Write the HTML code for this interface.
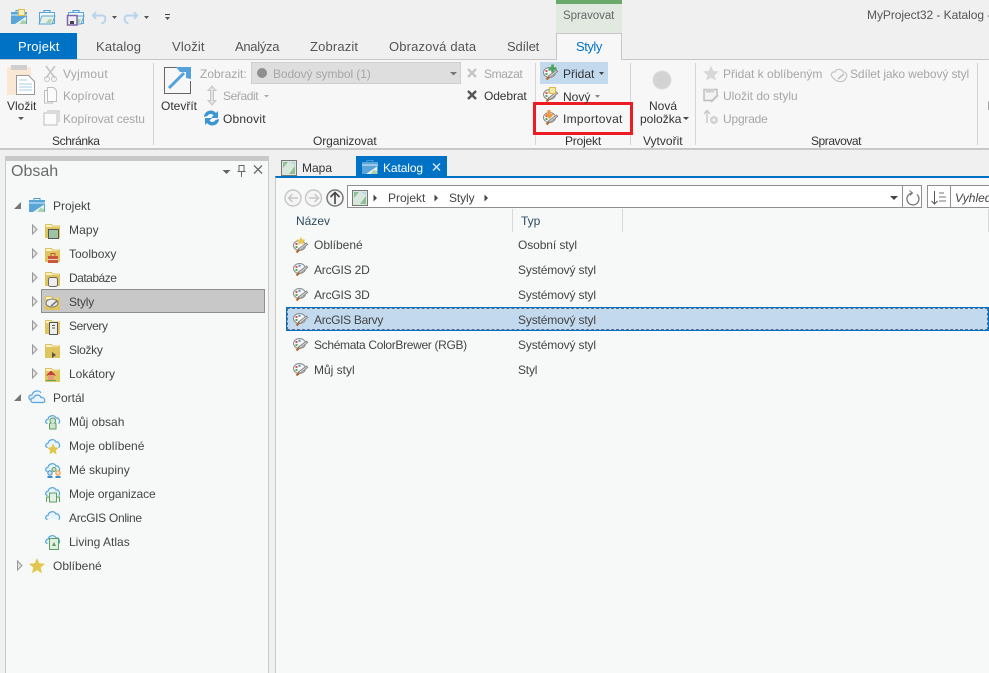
<!DOCTYPE html>
<html lang="cs"><head><meta charset="utf-8"><title>MyProject32 - Katalog</title>
<style>
html,body{margin:0;padding:0;overflow:hidden}
body{width:989px;height:673px;overflow:hidden;position:relative;background:#f0f0f0;font-family:"Liberation Sans",sans-serif;font-size:12px;color:#444}
.b{position:absolute;box-sizing:border-box}
.t{position:absolute;white-space:nowrap;line-height:16px;height:16px;letter-spacing:0}
.d{color:#a6a6a6}
.k{color:#333}
.tab{font-size:13px;color:#555;letter-spacing:.15px}
svg.o{position:absolute;left:0;top:0}
</style></head><body>

<div class="b" style="left:0;top:59px;width:989px;height:91px;background:#f7f7f7;border-top:1px solid #c6c6c6;border-bottom:2px solid #c8c8c8"></div>
<div class="b" style="left:0;top:33px;width:77px;height:26px;background:#0072c6"></div>
<div class="b" style="left:556px;top:0;width:66px;height:33px;background:#e1e9e1;border-top:4px solid #6aa96a"></div>
<div class="b" style="left:556px;top:33px;width:66px;height:27px;background:#f7f7f7;border:1px solid #c6c6c6;border-bottom:0"></div>

<div class="b" style="left:153px;top:63px;width:1px;height:82px;background:#d6d6d6"></div>
<div class="b" style="left:535px;top:63px;width:1px;height:82px;background:#d6d6d6"></div>
<div class="b" style="left:630px;top:63px;width:1px;height:82px;background:#d6d6d6"></div>
<div class="b" style="left:695px;top:63px;width:1px;height:82px;background:#d6d6d6"></div>
<div class="b" style="left:977px;top:63px;width:1px;height:82px;background:#d6d6d6"></div>

<div class="b" style="left:251px;top:62px;width:210px;height:22px;background:#dedede;border:1px solid #cfcfcf"></div>
<div class="b" style="left:540px;top:62px;width:68px;height:22px;background:#c3d9ee"></div>

<!-- left pane -->
<div class="b" style="left:5px;top:156px;width:264px;height:517px;background:#f7f9f9;border:1px solid #c8c8c8;border-top:5px solid #c8c8c8;border-bottom:0"></div>
<div class="b" style="left:41px;top:289px;width:224px;height:24px;background:#c8c8c8;border:1px solid #8f8f8f"></div>

<!-- right pane -->
<div class="b" style="left:275px;top:176px;width:714px;height:497px;background:#f7f9f9;border-left:1px solid #c8c8c8;border-top:2px solid #0072c6"></div>
<div class="b" style="left:356px;top:156px;width:91px;height:20px;background:#0072c6"></div>
<div class="b" style="left:347px;top:185px;width:575px;height:23px;background:#fff;border:1px solid #8f8f8f"></div>
<div class="b" style="left:902px;top:185px;width:1px;height:23px;background:#8f8f8f"></div>
<div class="b" style="left:927px;top:185px;width:62px;height:23px;background:#fff;border:1px solid #8f8f8f;border-right:0"></div>
<div class="b" style="left:950px;top:185px;width:1px;height:23px;background:#8f8f8f"></div>
<div class="b" style="left:512px;top:209px;width:1px;height:23px;background:#d8d8d8"></div>
<div class="b" style="left:622px;top:209px;width:1px;height:23px;background:#d8d8d8"></div>
<div class="b" style="left:988px;top:209px;width:1px;height:23px;background:#d8d8d8"></div>
<div class="b" style="left:286px;top:307px;width:703px;height:24px;background:#c3d9ee;border:1px solid #0072c6"></div>
<div class="b" style="left:287px;top:308px;width:701px;height:22px;border:1px dashed #50708c"></div>

<svg class="o" width="989" height="673" viewBox="0 0 989 673" xmlns="http://www.w3.org/2000/svg">
<defs>
<g id="pal">
 <ellipse cx="6.500" cy="5.500" rx="6" ry="5" fill="#f6f6f6" stroke="#8a8a8a" stroke-width="1"/>
 <rect x="2.500" y="3" width="2" height="2" fill="#d9534f"/><rect x="5.500" y="1.800" width="2" height="2" fill="#4a90d0"/><rect x="2.500" y="6" width="2" height="2" fill="#5aa55a"/>
 <path d="M5.500 10 L14.500 3.500" stroke="#8a8a8a" stroke-width="2.800"/><path d="M6.500 9.500 L13.500 4.200" stroke="#e6e6e6" stroke-width=".8"/>
 <path d="M3.500 12.500 L6 10" stroke="#b0692a" stroke-width="2.200"/>
</g>
<g id="fold">
 <path d="M.5 14V1.500h6l1 1.500h7v11z" fill="#fbf3d0" stroke="#dcc25c"/>
 <rect x="0" y="4" width="15" height="11" fill="#e0c55c"/>
</g>
<g id="case">
 <path d="M5 2.500V.5h6v2" fill="none" stroke="#4b9cd3"/>
 <rect x="0" y="2" width="16" height="12" fill="#5aa5d8"/>
 <path d="M0 5h16" stroke="#d8ebf7"/>
 <path d="M4 14L15 6.500V14z" fill="#e6f1ea"/>
 <path d="M8.500 14l3-4 3.500 1v3z" fill="#a9d2a8"/>
</g>
<g id="caseo">
 <path d="M5 2.500V.5h6v2" fill="none" stroke="#4b9cd3"/>
 <rect x=".5" y="2.500" width="15" height="11" fill="#f3f8fb" stroke="#5aa5d8"/>
 <path d="M0 14l3-8h13l-3 8z" fill="#e6f1ea" stroke="#5aa5d8"/>
 <path d="M7 13l3-4 3 .5-1.500 3.500z" fill="#a9d2a8"/>
</g>
<g id="map">
 <rect x=".5" y=".5" width="15" height="15" fill="#d9e8dc" stroke="#777"/>
 <path d="M2 2h5l-5 6z" fill="#8fbf93"/><path d="M8 14l6-8v8z" fill="#8fbf93"/><path d="M9 2h5v3z" fill="#b8d3e6"/>
</g>
<g id="tri"><path d="M.5 0v9l4.500-4.500z" fill="#e2e2e2" stroke="#999"/></g>
<g id="cloud"><path d="M2.500 9.500C0 9 0 5.500 3 5.300 3.800 1 9.500.5 11 4c3-.8 5 4.500 2.500 5.500" fill="#e8f3fb" stroke="#5aa5d8" stroke-width="1.200"/></g>
</defs>

<!-- QAT -->
<use href="#case" x="11" y="10"/><rect x="18.500" y="9.500" width="6" height="6" fill="#f7eeb4" stroke="#dcc050"/>
<use href="#caseo" x="39" y="10"/>
<use href="#caseo" x="68" y="10"/><rect x="67.500" y="15.500" width="9.500" height="9.500" fill="#f0eef5" stroke="#7d67a8" stroke-width="1.500"/><rect x="70" y="21" width="4" height="3" fill="#444"/>
<path d="M96 12l-3 3.500 3 3.500M93.500 15.500h9c4 0 4 7-1 8" fill="none" stroke="#b6d5ec" stroke-width="2"/>
<path d="M134 12l3 3.500-3 3.500M136.500 15.500h-9c-4 0-4 7 1 8" fill="none" stroke="#b6d5ec" stroke-width="2"/>
<path d="M112 16h5l-2.500 3zM144 16h5l-2.500 3zM165 17h5l-2.500 3z" fill="#555"/><rect x="165" y="14" width="5" height="1" fill="#444"/>

<!-- Clipboard group -->
<rect x="7" y="67" width="24" height="28" fill="#fbe8d4"/><rect x="11" y="65" width="16" height="5" fill="#cfcfcf"/>
<path d="M16.500 75.500h12l6 6v13h-18z" fill="#fff" stroke="#9a9a9a"/><path d="M19 80h8M19 84h13M19 87h13M19 90h13" stroke="#a7cdea"/>
<path d="M18 117h6l-3 3z" fill="#555"/>
<path d="M46 66l9 12M55 66l-9 12" stroke="#c4c4c4" stroke-width="1.600"/><circle cx="47" cy="79" r="2.500" fill="none" stroke="#c4c4c4"/><circle cx="54" cy="79" r="2.500" fill="none" stroke="#c4c4c4"/>
<path d="M47.500 90.500v-3h6l3 3v11h-9zM44.500 90.500h3v11h5v1.500h-8z" fill="#fbfbfb" stroke="#bdbdbd"/>
<rect x="44" y="113" width="13" height="12" fill="#fbfbfb" stroke="#bdbdbd"/><path d="M47 111h12v11" fill="none" stroke="#bdbdbd"/>

<!-- Open -->
<path d="M178 67.500h-13.500v26h26V81" fill="none" stroke="#666"/>
<path d="M169 88l15-15" stroke="#53a3da" stroke-width="3"/><path d="M176 67h15v12l-5-1 0-6-6 0z" fill="#53a3da"/>
<circle cx="262" cy="73" r="5" fill="#8f8f8f"/><path d="M450 72h7l-3.500 3.500z" fill="#777"/>
<path d="M212 86l-4 4.500h2.500v10H208l4 4.500 4-4.500h-2.500v-10h2.500z" fill="#e3e3e3" stroke="#c6c6c6"/>
<path d="M264 95h5l-2.500 2.500z" fill="#aaa"/>
<path d="M204 117c0-6 8-9 12-4l2-2v7h-7l2.500-2.500c-2-2.500-5-1.500-6 .5zM219 119c0 6-8 9-12 4l-2 2v-7h7l-2.500 2.500c2 2.500 5 1.500 6-.5z" fill="#3c96d2"/>
<path d="M468 69l8 8M476 69l-8 8" stroke="#c4c4c4" stroke-width="2.400"/>
<path d="M468 91l8 8M476 91l-8 8" stroke="#555" stroke-width="2.400"/>

<!-- Style cmds -->
<use href="#pal" x="543" y="67"/><path d="M552.500 64.500v8M548.500 68.500h8" stroke="#4aa356" stroke-width="2.600"/>
<path d="M599 72h5l-2.500 3z" fill="#444"/>
<use href="#pal" x="543" y="89"/><rect x="549.500" y="87.500" width="6" height="6" fill="#f5ea9e" stroke="#d8bb4a"/>
<path d="M595 95h5l-2.500 3z" fill="#888"/>
<use href="#pal" x="543" y="112"/><path d="M549 110v5" stroke="#f09a3c" stroke-width="3"/><path d="M545 114l4.500 5 4.500-5z" fill="#f09a3c"/>
<rect x="534.500" y="103.500" width="97" height="30" fill="none" stroke="#ed1c24" stroke-width="3"/>

<circle cx="662" cy="80" r="9" fill="#d3d3d3" stroke="#ddd"/>
<path d="M683 117h6l-3 3z" fill="#444"/>

<!-- Manage -->
<path d="M711 65.500l2.300 5.500 5.700.4-4.400 3.700 1.400 5.600-5-3-5 3 1.400-5.600-4.400-3.700 5.700-.4z" fill="#d8d8d8"/>
<path d="M832 76.500c-2-2 0-5 3-4.500 1-3.500 7-3.500 8 0 3 0 5 3 3 6-1 3-4 4-7 3.500-3-.5-5-2-7-5z" fill="#f6f6f6" stroke="#c8c8c8" stroke-width="1.300"/><path d="M838 79l6-5" stroke="#bdbdbd" stroke-width="1.500"/>
<path d="M704 89.500h13v6l-5 5h-8z" fill="#f2f2f2" stroke="#bdbdbd" stroke-width="1.400"/><rect x="706" y="89" width="8" height="3.500" fill="#cfcfcf"/><path d="M711 102l7-7" stroke="#c4c4c4" stroke-width="2"/>
<path d="M707 123v-12M704 114l3-3.500 3 3.500" fill="none" stroke="#c4c4c4" stroke-width="1.300"/>
<circle cx="714" cy="120" r="4" fill="#d0d0d0"/><circle cx="714" cy="120" r="1.500" fill="#f7f7f7"/>

<!-- Pane controls -->
<path d="M222.500 170h8l-4 4z" fill="#666"/>
<path d="M239 165.500h5v6h-5zM237.500 171.500h8M241.500 172v5" fill="none" stroke="#666"/>
<path d="M254 165.500l8 8M262 165.500l-8 8" stroke="#666" stroke-width="1.300"/>

<!-- Tree -->
<g transform="translate(0,1)">
<path d="M14 208h7v-7z" fill="#777"/>
<use href="#case" x="29" y="197"/>
<use href="#tri" x="32" y="224"/><use href="#fold" x="45" y="222"/><rect x="48.500" y="228.500" width="10" height="9" fill="#9fc4a3" stroke="#555"/>
<use href="#tri" x="32" y="248"/><use href="#fold" x="45" y="246"/><rect x="48" y="255" width="10" height="7" fill="#c9583a"/><rect x="51" y="252.500" width="4" height="3" fill="none" stroke="#c9583a"/><rect x="48" y="258" width="10" height="1" fill="#f0d0c0"/>
<use href="#tri" x="32" y="272"/><use href="#fold" x="45" y="270"/><rect x="48.500" y="276.500" width="9" height="9" rx="2" fill="#eee" stroke="#666"/>
<use href="#tri" x="32" y="296"/><use href="#fold" x="45" y="294"/><ellipse cx="52" cy="302" rx="6" ry="4" fill="#eee" stroke="#777"/><path d="M51 305l6-5" stroke="#777" stroke-width="1.500"/>
<use href="#tri" x="32" y="320"/><use href="#fold" x="45" y="318"/><rect x="49.500" y="321.500" width="8" height="12" fill="#eee" stroke="#555"/><path d="M52 324.500h3M52 327h3" stroke="#555"/>
<use href="#tri" x="32" y="344"/><use href="#fold" x="45" y="342"/><path d="M52 351v6l4-3z" fill="#555"/>
<use href="#tri" x="32" y="368"/><use href="#fold" x="45" y="366"/><path d="M46 374.500l5-5 5 5z" fill="#c9403a"/><rect x="48" y="374" width="6" height="5" fill="#e3a078"/><path d="M46 379.500h10" stroke="#5aa55a"/>
<path d="M14 400h7v-7z" fill="#777"/>
<path d="M31 399C28 398 28 394 32 394 33 389 40 389 41 392" fill="#e8f3fb" stroke="#5aa5d8" stroke-width="1.200"/>
<path d="M33 401.500C30 401 30 397 33.500 397 34.500 393.500 40 393 41 396.500c3-1 5.500 4 2.500 5z" fill="#e8f3fb" stroke="#5aa5d8" stroke-width="1.200"/>
<use href="#cloud" x="45" y="413"/><path d="M49.500 428v-5c0-1 1-1 1.500-1a2.800 2.800 0 1 1 3.500 0c.5 0 1.500 0 1.500 1v5z" fill="#cfe5cf" stroke="#5b9f62"/>
<use href="#cloud" x="45" y="437"/><path d="M53 442.500l1.800 3.700 4 .5-3 2.700.8 4-3.600-2-3.600 2 .8-4-3-2.700 4-.5z" fill="#e3c64e"/>
<use href="#cloud" x="45" y="461"/><circle cx="50" cy="472" r="2.200" fill="#cbe0f2" stroke="#3c8ecb"/><circle cx="58" cy="472" r="2.200" fill="#fbd9b3" stroke="#ee9140"/><circle cx="54" cy="468.500" r="2" fill="#cfe5cf" stroke="#5b9f62"/><path d="M47.500 475h5v2h-5zM55.500 475h5v2h-5z" fill="#3c8ecb"/>
<use href="#cloud" x="45" y="485"/><path d="M49.500 501v-9h7v9zM46.500 501v-5h3M56.500 496h3v5" fill="#e3f0e3" stroke="#5b9f62"/>
<use href="#cloud" x="45" y="509"/>
<use href="#cloud" x="45" y="533"/><rect x="49.500" y="537.500" width="9" height="11" fill="#dff0df" stroke="#5b9f62"/><path d="M52 545l2-4 2 4z" fill="#5b9f62"/>
<use href="#tri" x="17" y="560"/>
<path d="M37 557l2.300 5.300 5.700.5-4.300 3.800 1.300 5.600-5-3-5 3 1.300-5.600-4.300-3.800 5.700-.5z" fill="#e3c64e"/>
</g>

<!-- Tabs -->
<use href="#map" x="281" y="160"/>
<use href="#case" x="362" y="160"/>
<path d="M433 163.500l7 7M440 163.500l-7 7" stroke="#cfe3f4" stroke-width="1.500"/>

<!-- Nav -->
<circle cx="293" cy="198" r="8" fill="#f5f5f5" stroke="#c6c6c6" stroke-width="1.400"/><path d="M298 198h-9M292.500 194l-4 4 4 4" fill="none" stroke="#c6c6c6" stroke-width="1.400"/>
<circle cx="313.500" cy="198" r="8" fill="#f5f5f5" stroke="#c6c6c6" stroke-width="1.400"/><path d="M309 198h9M314.500 194l4 4-4 4" fill="none" stroke="#c6c6c6" stroke-width="1.400"/>
<circle cx="335" cy="198" r="8" fill="#f5f5f5" stroke="#777" stroke-width="1.500"/><path d="M335 204v-11M330.500 197l4.500-4.500 4.500 4.500" fill="none" stroke="#444" stroke-width="1.600"/>
<use href="#map" x="352" y="190"/>
<path d="M373.500 194.500v7l3.500-3.500zM434.500 194.500v7l3.500-3.500zM484.500 194.500v7l3.500-3.500z" fill="#444"/>
<path d="M890 196h8l-4 4z" fill="#444"/>
<path d="M917 194.500a6 6 0 1 1-5-1.500" fill="none" stroke="#777" stroke-width="1.300"/><path d="M909.500 190.500l3 2.500-2.500 2.500" fill="none" stroke="#777"/>
<path d="M934.500 191v13M931.500 201l3 3 3-3" fill="none" stroke="#555"/><path d="M939 193h5M939 197h7M939 201h7" stroke="#777"/>

<!-- Row icons -->
<use href="#pal" x="293" y="240"/><path d="M301 236.500l1.300 3 3.200.3-2.400 2.100.7 3.100-2.800-1.700-2.800 1.700.7-3.100-2.400-2.100 3.200-.3z" fill="#e8c94e"/>
<use href="#pal" x="293" y="263"/>
<use href="#pal" x="293" y="288"/>
<use href="#pal" x="293" y="313"/>
<use href="#pal" x="293" y="338"/>
<use href="#pal" x="293" y="363"/>
</svg>

<!-- Title / tabs -->
<span class="t" style="left:867px;top:7px;color:#555;letter-spacing:-.05px">MyProject32 - Katalog -</span>
<span class="t" style="left:563px;top:8px;color:#666;font-size:11.500px;letter-spacing:-.05px">Spravovat</span>
<span class="t tab" style="left:18px;top:39px;color:#fff">Projekt</span>
<span class="t tab" style="left:96px;top:39px">Katalog</span>
<span class="t tab" style="left:172px;top:39px">Vložit</span>
<span class="t tab" style="left:235px;top:39px;letter-spacing:-.3px">Analýza</span>
<span class="t tab" style="left:310px;top:39px">Zobrazit</span>
<span class="t tab" style="left:389px;top:39px">Obrazová data</span>
<span class="t tab" style="left:507px;top:39px;letter-spacing:-.2px">Sdílet</span>
<span class="t tab" style="left:576px;top:39px;color:#0072c6;letter-spacing:-.45px">Styly</span>

<!-- Ribbon text -->
<span class="t k" style="left:7px;top:98px">Vložit</span>
<span class="t d" style="left:63px;top:66px;letter-spacing:.3px">Vyjmout</span>
<span class="t d" style="left:63px;top:88px">Kopírovat</span>
<span class="t d" style="left:63px;top:111px;letter-spacing:-.1px">Kopírovat cestu</span>
<span class="t k" style="left:52px;top:133px;letter-spacing:-.4px">Schránka</span>
<span class="t k" style="left:161px;top:98px">Otevřít</span>
<span class="t d" style="left:200px;top:66px">Zobrazit:</span>
<span class="t d" style="left:273px;top:66px;letter-spacing:-.1px">Bodový symbol (1)</span>
<span class="t d" style="left:223px;top:88px;letter-spacing:-.4px">Seřadit</span>
<span class="t k" style="left:223px;top:111px;letter-spacing:.2px">Obnovit</span>
<span class="t k" style="left:313px;top:133px;letter-spacing:-.1px">Organizovat</span>
<span class="t d" style="left:484px;top:66px;letter-spacing:-.4px">Smazat</span>
<span class="t k" style="left:484px;top:88px;letter-spacing:-.1px">Odebrat</span>
<span class="t k" style="left:563px;top:66px">Přidat</span>
<span class="t k" style="left:563px;top:89px">Nový</span>
<span class="t k" style="left:563px;top:111px;letter-spacing:.3px">Importovat</span>
<span class="t k" style="left:565px;top:133px;letter-spacing:-.2px">Projekt</span>
<span class="t k" style="left:649px;top:98px">Nová</span>
<span class="t k" style="left:640px;top:111px">položka</span>
<span class="t k" style="left:643px;top:133px">Vytvořit</span>
<span class="t d" style="left:723px;top:66px">Přidat k oblíbeným</span>
<span class="t d" style="left:850px;top:66px;letter-spacing:-.1px">Sdílet jako webový styl</span>
<span class="t d" style="left:723px;top:88px">Uložit do stylu</span>
<span class="t d" style="left:723px;top:111px;letter-spacing:-.2px">Upgrade</span>
<span class="t k" style="left:811px;top:133px;letter-spacing:-.45px">Spravovat</span>
<span class="t d" style="left:987px;top:98px">P</span>

<!-- Left pane -->
<span class="t" style="left:11px;top:164px;font-size:16px;color:#6a6a6a">Obsah</span>
<span class="t" style="left:53px;top:198px">Projekt</span>
<span class="t" style="left:69px;top:222px;letter-spacing:.1px">Mapy</span>
<span class="t" style="left:69px;top:246px">Toolboxy</span>
<span class="t" style="left:69px;top:270px;letter-spacing:-.5px">Databáze</span>
<span class="t" style="left:69px;top:294px;letter-spacing:-.2px">Styly</span>
<span class="t" style="left:69px;top:318px;letter-spacing:-.4px">Servery</span>
<span class="t" style="left:69px;top:342px;letter-spacing:-.3px">Složky</span>
<span class="t" style="left:69px;top:366px">Lokátory</span>
<span class="t" style="left:53px;top:390px">Portál</span>
<span class="t" style="left:69px;top:414px">Můj obsah</span>
<span class="t" style="left:69px;top:438px">Moje oblíbené</span>
<span class="t" style="left:69px;top:462px">Mé skupiny</span>
<span class="t" style="left:69px;top:486px;letter-spacing:-.1px">Moje organizace</span>
<span class="t" style="left:69px;top:510px;letter-spacing:-.3px">ArcGIS Online</span>
<span class="t" style="left:69px;top:534px">Living Atlas</span>
<span class="t" style="left:53px;top:558px">Oblíbené</span>

<!-- Catalog -->
<span class="t k" style="left:302px;top:160px">Mapa</span>
<span class="t" style="left:383px;top:160px;color:#fff;letter-spacing:-.1px">Katalog</span>
<span class="t" style="left:388px;top:190px">Projekt</span>
<span class="t" style="left:449px;top:190px;letter-spacing:-.1px">Styly</span>
<span class="t" style="left:955px;top:190px;font-style:italic">Vyhledat</span>
<span class="t" style="left:296px;top:213px;color:#2f4a5e">Název</span>
<span class="t" style="left:521px;top:213px;color:#2f4a5e">Typ</span>
<span class="t" style="left:314px;top:237px">Oblíbené</span><span class="t" style="left:518px;top:237px;letter-spacing:-.1px">Osobní styl</span>
<span class="t" style="left:314px;top:262px;letter-spacing:-.2px">ArcGIS 2D</span><span class="t" style="left:518px;top:262px;letter-spacing:-.15px">Systémový styl</span>
<span class="t" style="left:314px;top:287px;letter-spacing:-.2px">ArcGIS 3D</span><span class="t" style="left:518px;top:287px;letter-spacing:-.15px">Systémový styl</span>
<span class="t" style="left:314px;top:312px;letter-spacing:-.3px">ArcGIS Barvy</span><span class="t" style="left:518px;top:312px;letter-spacing:-.15px">Systémový styl</span>
<span class="t" style="left:314px;top:337px;letter-spacing:-.33px">Schémata ColorBrewer (RGB)</span><span class="t" style="left:518px;top:337px;letter-spacing:-.15px">Systémový styl</span>
<span class="t" style="left:314px;top:362px">Můj styl</span><span class="t" style="left:518px;top:362px;letter-spacing:-.2px">Styl</span>
</body></html>
